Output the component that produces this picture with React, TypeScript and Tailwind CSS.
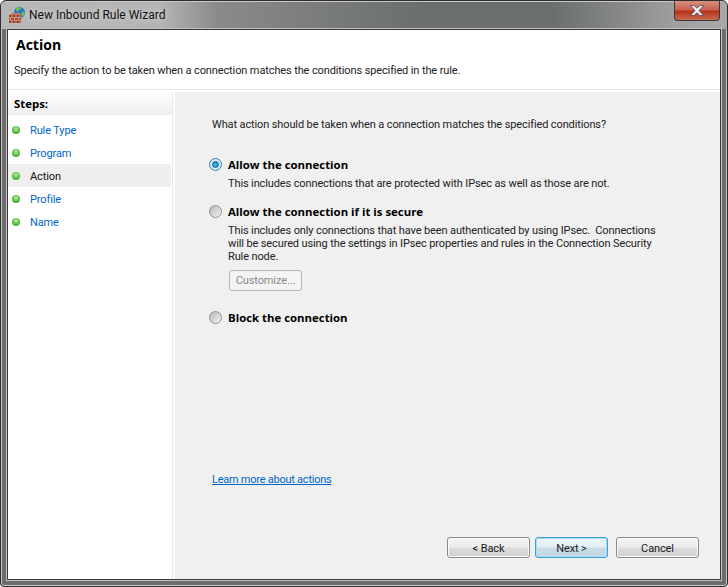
const steps = [
  { label: 'Rule Type' },
  { label: 'Program' },
  { label: 'Action', current: true },
  { label: 'Profile' },
  { label: 'Name' },
]

function FirewallIcon() {
  return (
    <svg width="17" height="16" viewBox="0 0 17 16" className="shrink-0">
      <circle cx="10.500" cy="5.500" r="5.500" fill="#2a78cc" />
      <path d="M7 1.500c2-1.500 4-1 5-.5-.3 2-2.300 1.800-2.800 3.300-1.500.5-2.700-.8-2.200-2.800zM12.500 5.500c1.500-.5 2.500-.8 3.300-.5 0 1.800-1 3.500-2.500 4.500-1.300-1-1.300-2.800-.8-4z" fill="#6cc44c" />
      <path d="M0 8.500 3 6h8v3H0z" fill="#c87860" />
      <rect x="0" y="8" width="12" height="8" fill="#9c4428" />
      <path d="M0 10.500h12M0 13.200h12M3 8v2.500M7 8v2.500M11 8v2.500M1.500 10.500v2.700M5.500 10.500v2.700M9.500 10.500v2.700M3 13.200V16M7 13.200V16M11 13.200V16" stroke="#d8a898" strokeWidth="0.8" fill="none" />
    </svg>
  )
}

function CloseGlyph() {
  return (
    <svg width="16" height="11" viewBox="0 0 16 11">
      <path d="M1.500 .5h3.500l3 2.800 3-2.800h3.500l-4.500 5 4.500 5h-3.500l-3-2.800-3 2.800H1.500l4.500-5z" fill="#f4f4f8" stroke="#4a4a58" strokeWidth="0.8" />
    </svg>
  )
}

function Radio({ checked }: { checked?: boolean }) {
  return (
    <span
      className={
        checked
          ? 'flex h-[13px] w-[13px] shrink-0 items-center justify-center rounded-full border border-[#3a7ea8] bg-[#d8ecf8]'
          : 'flex h-[13px] w-[13px] shrink-0 items-center justify-center rounded-full border border-[#8e8f8f] bg-[linear-gradient(135deg,#b8b8b8,#f4f4f4)]'
      }
    >
      {checked && <span className="h-[7px] w-[7px] rounded-full border border-[#0f5f94] bg-[radial-gradient(circle_at_50%_60%,#4cc2f5,#0c72b4)]" />}
    </span>
  )
}

function OptionTitle({ title, checked }: { title: string; checked?: boolean }) {
  return (
    <div className="flex h-[16px] items-center gap-[6px]">
      <Radio checked={checked} />
      <span className="font-['Open_Sans',sans-serif] text-[11.400px] font-bold tracking-normal text-black">{title}</span>
    </div>
  )
}

function WizardButton({ label, focused, className }: { label: string; focused?: boolean; className?: string }) {
  return (
    <button
      className={`h-[21px] rounded-[3px] border pt-[2px] text-center leading-[17px] text-[#1a1a1a] ${
        focused
          ? 'border-[#3c9fd4] bg-[linear-gradient(#eef6fb_0%,#e2eef5_48%,#c8dce8_52%,#c4d8e4_100%)] shadow-[inset_0_0_0_1px_#a8def5]'
          : 'border-[#8a8a8a] bg-[linear-gradient(#f4f4f4_0%,#ebebeb_48%,#dcdcdc_52%,#d0d0d0_100%)] shadow-[inset_0_0_0_1px_#fbfbfb]'
      } ${className ?? ''}`}
    >
      {label}
    </button>
  )
}

export default function App() {
  return (
    <div className="flex h-[587px] w-[728px] flex-col overflow-hidden rounded-t-[6px] rounded-b-[4px] border border-[#2e2e2e] bg-[#6e6e6e] px-[6px] pb-[6px] font-['Roboto',sans-serif] text-[11px] leading-[15px] tracking-[-0.12px] text-[#222] shadow-[inset_0_0_0_1px_#c8c8c8]">
      {/* Title bar */}
      <div className="mx-[-6px] mt-[1px] flex h-[27px] shrink-0 items-start justify-between bg-[linear-gradient(90deg,#b8b8b8_0%,#b4b4b4_22%,#8a8a8a_30%,#6a6e6e_58%,#6a6e6e_76%,#a2a2a2_94%,#a8a8a8_100%)] pl-[8px] pr-[7px]">
        <div className="flex items-center gap-[3px] pt-[5px]">
          <FirewallIcon />
          <span className="text-[12px] tracking-normal text-[#111] [text-shadow:0_0_6px_rgba(255,255,255,0.7)]">New Inbound Rule Wizard</span>
        </div>
        <div className="mt-[-1px] flex h-[20px] w-[46px] items-center justify-center rounded-b-[4px] border border-t-0 border-[#3a3a3a] bg-[linear-gradient(#d9907e_0%,#c8634e_45%,#b8331a_55%,#c86a50_100%)]">
          <CloseGlyph />
        </div>
      </div>

      <div className="flex flex-1 flex-col border border-[#3a3a3a] bg-white shadow-[0_0_0_1px_#c0c0c0]">
        {/* Header */}
        <div className="flex h-[60px] shrink-0 flex-col border-b border-[#e8e8e8] px-[6px] pt-[6px]">
          <h1 className="pl-[2px] font-['Open_Sans',sans-serif] text-[14px] font-bold leading-[18px] tracking-normal text-black">Action</h1>
          <p className="mt-[9px]">Specify the action to be taken when a connection matches the conditions specified in the rule.</p>
        </div>

        <div className="mt-[2px] flex flex-1">
          {/* Steps */}
          <div className="flex w-[164px] shrink-0 flex-col bg-white">
            <div className="flex h-[23px] items-center bg-[linear-gradient(#ffffff,#eeeeee)] pl-[6px] font-['Open_Sans',sans-serif] text-[11.400px] font-bold tracking-normal text-black">Steps:</div>
            <div className="flex flex-col pt-[3px]">
              {steps.map((s) => (
                <div key={s.label} className={`mr-[1px] flex h-[23px] items-center gap-[10px] pl-[4px] ${s.current ? 'bg-[#efefef] text-[#111]' : 'text-[#0066cc]'}`}>
                  <span className="h-[8px] w-[8px] rounded-full bg-[radial-gradient(circle_at_50%_35%,#b8eca8,#4fb838_60%,#3a9a28)]" />
                  <span className="pt-[1px]">{s.label}</span>
                </div>
              ))}
            </div>
          </div>
          <div className="w-[3px] shrink-0 border-l border-[#e8e8e8] bg-white" />

          {/* Content */}
          <div className="flex flex-1 flex-col bg-[#f0f0f0] pl-[37px] pr-[21px]">
            <p className="mt-[25px]">What action should be taken when a connection matches the specified conditions?</p>
            <div className="ml-[-3px] mt-[24px] flex flex-col">
              <OptionTitle title="Allow the connection" checked />
              <p className="ml-[19px] mt-[4px]">This includes connections that are protected with IPsec as well as those are not.</p>
              <div className="mt-[12px]">
                <OptionTitle title="Allow the connection if it is secure" />
              </div>
              <p className="ml-[19px] mt-[5px] whitespace-pre leading-[13px]">
                {'This includes only connections that have been authenticated by using IPsec.  Connections\nwill be secured using the settings in IPsec properties and rules in the Connection Security\nRule node.'}
              </p>
              <button className="ml-[20px] mt-[7px] h-[21px] w-[73px] rounded-[3px] border border-[#b5b5b5] bg-[#f4f4f4] pt-[1px] leading-[18px] text-[#8a8a8a]">Customize...</button>
              <div className="mt-[18px]">
                <OptionTitle title="Block the connection" />
              </div>
            </div>
            <a className="mt-[147px] w-fit tracking-[-0.24px] text-[#0066cc] underline">Learn more about actions</a>
            <div className="mt-auto flex justify-end pb-[21px]">
              <WizardButton label="< Back" className="w-[83px]" />
              <WizardButton label="Next >" focused className="ml-[5px] w-[73px]" />
              <WizardButton label="Cancel" className="ml-[8px] w-[83px]" />
            </div>
          </div>
        </div>
      </div>
    </div>
  )
}
